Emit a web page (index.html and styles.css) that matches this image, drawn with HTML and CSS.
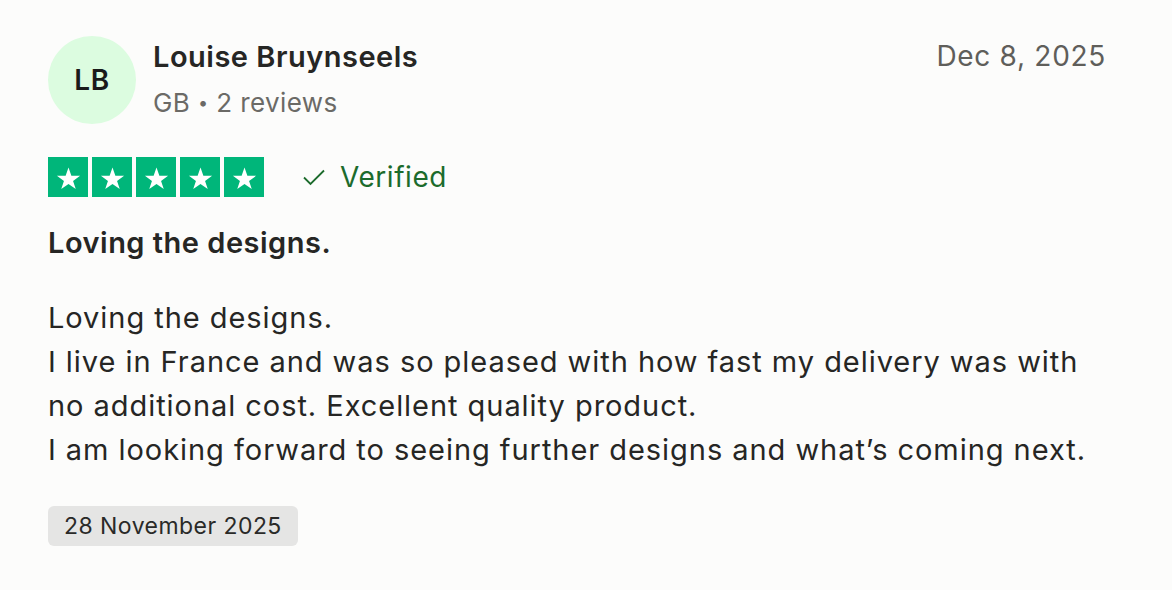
FILE: index.html
```html
<!DOCTYPE html>
<html lang="en">
<head>
<meta charset="utf-8">
<link rel="stylesheet" href="styles.css">
</head>
<body>
<article class="review">
  <header class="review-head">
    <div class="avatar">LB</div>
    <div class="consumer">
      <div class="consumer-name">Louise Bruynseels</div>
      <div class="consumer-meta">GB <span class="dot">•</span> 2 reviews</div>
    </div>
    <time class="review-date">Dec 8, 2025</time>
  </header>
  <div class="rating-row">
    <div class="stars">
      <span class="star"><svg viewBox="0 0 24 24"><path d="M12 3.2l2.55 7.3h7.75l-6.25 4.5 2.4 7.3L12 17.8l-6.45 4.5 2.4-7.3L1.7 10.5h7.75z" fill="#fff"/></svg></span>
      <span class="star"><svg viewBox="0 0 24 24"><path d="M12 3.2l2.55 7.3h7.75l-6.25 4.5 2.4 7.3L12 17.8l-6.45 4.5 2.4-7.3L1.7 10.5h7.75z" fill="#fff"/></svg></span>
      <span class="star"><svg viewBox="0 0 24 24"><path d="M12 3.2l2.55 7.3h7.75l-6.25 4.5 2.4 7.3L12 17.8l-6.45 4.5 2.4-7.3L1.7 10.5h7.75z" fill="#fff"/></svg></span>
      <span class="star"><svg viewBox="0 0 24 24"><path d="M12 3.2l2.55 7.3h7.75l-6.25 4.5 2.4 7.3L12 17.8l-6.45 4.5 2.4-7.3L1.7 10.5h7.75z" fill="#fff"/></svg></span>
      <span class="star"><svg viewBox="0 0 24 24"><path d="M12 3.2l2.55 7.3h7.75l-6.25 4.5 2.4 7.3L12 17.8l-6.45 4.5 2.4-7.3L1.7 10.5h7.75z" fill="#fff"/></svg></span>
    </div>
    <div class="verified">
      <svg class="check" viewBox="0 0 24 24"><path d="M2 12.5l6.5 6.5L22 5.5" fill="none" stroke="#1c6b2c" stroke-width="1.8"/></svg>
      <span>Verified</span>
    </div>
  </div>
  <h2 class="review-title">Loving the designs.</h2>
  <p class="review-text">Loving the designs.<br>I live in France and was so pleased with how fast my delivery was with no additional cost. Excellent quality product.<br>I am looking forward to seeing further designs and what’s coming next.</p>
  <div class="experience-date">28 November 2025</div>
</article>
</body>
</html>
```

FILE: styles.css
```css
* { box-sizing: border-box; }
html, body { margin: 0; padding: 0; }
body {
  background: #fcfcfb;
  font-family: Inter, "Liberation Sans", Arial, sans-serif;
  color: #2a2a28;
  width: 1172px;
  height: 590px;
}
.review {
  padding: 36px 66px 0 48px;
}
.review-head {
  display: flex;
  align-items: flex-start;
}
.avatar {
  width: 88px;
  height: 88px;
  border-radius: 50%;
  background: #dcfce0;
  display: flex;
  align-items: center;
  justify-content: center;
  font-size: 28px;
  font-weight: 600;
  letter-spacing: 0.5px;
  color: #1a1a1a;
  flex: none;
}
.consumer {
  margin-left: 17px;
  flex: 1;
  padding-top: 3px;
}
.consumer-name {
  font-size: 29px;
  font-weight: 600;
  letter-spacing: 0.5px;
  line-height: 36px;
  color: #262624;
}
.consumer-meta {
  font-size: 26px;
  letter-spacing: 0.4px;
  line-height: 34px;
  color: #6b6a66;
  margin-top: 11px;
}
.dot { font-size: 18px; vertical-align: 3px; }
.review-date {
  font-size: 28px;
  color: #5f5e5a;
  line-height: 36px;
  padding-top: 2px;
  letter-spacing: 0.7px;
}
.rating-row {
  display: flex;
  align-items: center;
  margin-top: 33px;
}
.stars { display: flex; gap: 4px; }
.star {
  width: 40px;
  height: 40px;
  background: #00b67a;
  display: flex;
  align-items: center;
  justify-content: center;
}
.star svg { width: 27px; height: 27px; }
.verified {
  display: flex;
  align-items: center;
  margin-left: 38px;
  color: #1c6b2c;
  font-size: 28px;
  letter-spacing: 0.55px;
}
.check { width: 24px; height: 24px; margin-right: 14px; }
.review-title {
  margin: 28px 0 0;
  font-size: 29px;
  font-weight: 600;
  letter-spacing: 0.5px;
  line-height: 36px;
  color: #262624;
}
.review-text {
  margin: 35px 0 0;
  font-size: 29px;
  letter-spacing: 0.95px;
  line-height: 44px;
  color: #262624;
}
.experience-date {
  display: inline-block;
  margin-top: 34px;
  background: #e5e5e4;
  border-radius: 6px;
  padding: 6px 16px;
  font-size: 23px;
  letter-spacing: 0.45px;
  line-height: 28px;
  color: #2a2a28;
}
```
